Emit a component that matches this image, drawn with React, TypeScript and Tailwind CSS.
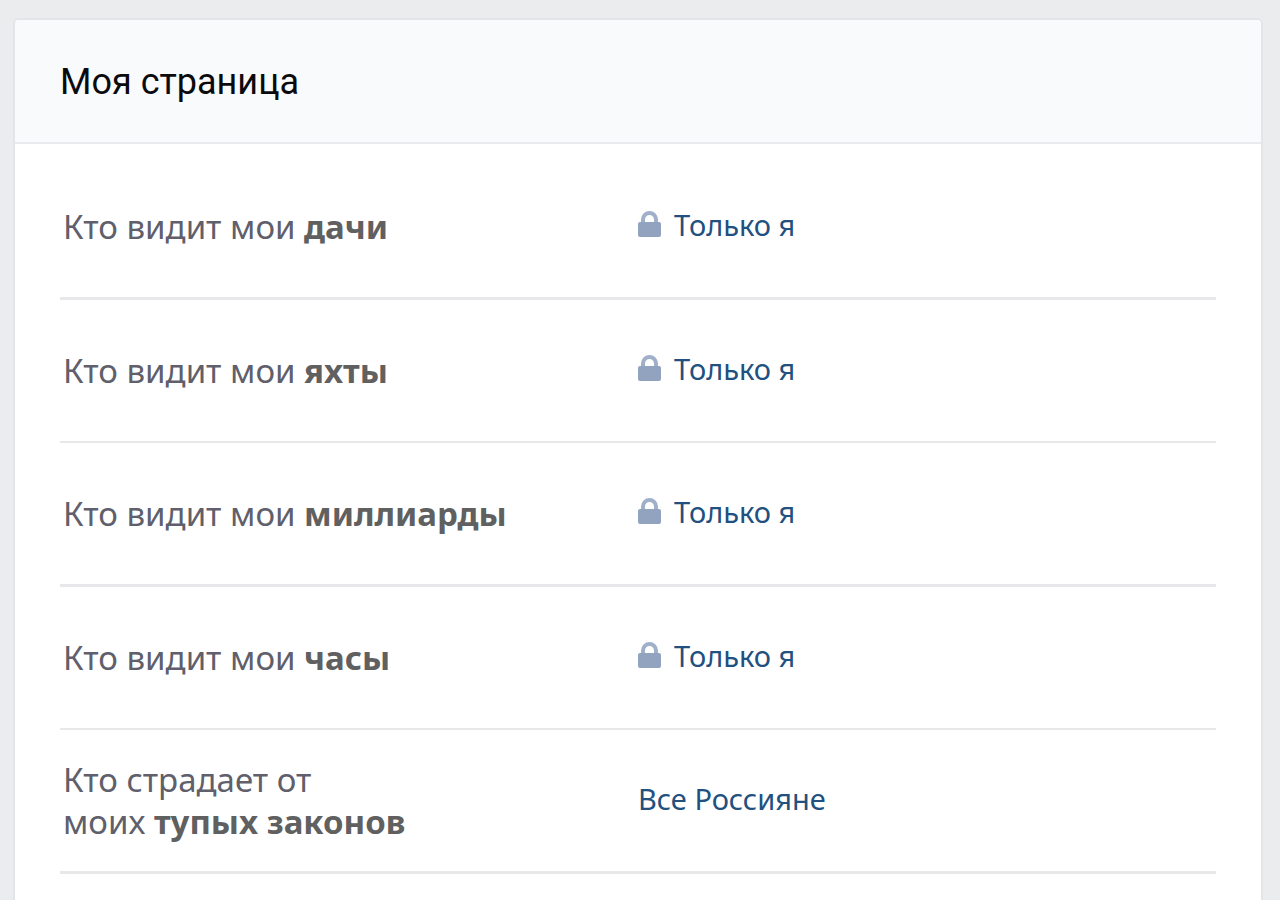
import React from "react";

interface PrivacySetting {
  id: string;
  text: React.ReactNode;
  subject: string;
  value: string;
  locked: boolean;
}

const settings: PrivacySetting[] = [
  { id: "dachas", text: "Кто видит мои ", subject: "дачи", value: "Только я", locked: true },
  { id: "yachts", text: "Кто видит мои ", subject: "яхты", value: "Только я", locked: true },
  { id: "billions", text: "Кто видит мои ", subject: "миллиарды", value: "Только я", locked: true },
  { id: "watches", text: "Кто видит мои ", subject: "часы", value: "Только я", locked: true },
  {
    id: "laws",
    text: (
      <>
        Кто страдает от
        <br />
        моих{" "}
      </>
    ),
    subject: "тупых законов",
    value: "Все Россияне",
    locked: false,
  },
];

const LockIcon: React.FC = () => (
  <svg
    viewBox="0 0 24 28"
    className="h-7 w-6 shrink-0"
    fill="none"
    aria-hidden="true"
  >
    <path
      d="M5 14V8.5a6.5 6.5 0 0 1 13 0V14"
      stroke="#a0b0c9"
      strokeWidth="4"
    />
    <rect x="0" y="11" width="23" height="15" rx="2" fill="#92a3c0" />
  </svg>
);

const SettingRow: React.FC<{ setting: PrivacySetting }> = ({ setting }) => (
  <li className="border-[#e8e8ea] odd:border-b-3 even:border-b-2">
    <div className="grid min-h-[141px] grid-cols-2 items-center">
      <span
        id={setting.id}
        className="pl-[3px] text-[33px] leading-[42px] text-[#605f6b]"
      >
        {setting.text}
        <b className="font-bold text-[#606060]">{setting.subject}</b>
      </span>
      <button
        type="button"
        aria-describedby={setting.id}
        className="flex cursor-pointer items-center gap-3 justify-self-start pb-1 text-[29px] leading-[42px] text-[#22507f] hover:underline"
      >
        {setting.locked && <LockIcon />}
        {setting.value}
      </button>
    </div>
  </li>
);

const App: React.FC = () => {
  return (
    <div className="min-h-screen bg-[#ebecee] pt-5 pr-[19px] pl-[15px] font-['Noto_Sans',sans-serif]">
      <main className="min-h-[calc(100vh-20px)] rounded-t-sm bg-white shadow-[0_0_0_2px_#e4e4e9]">
        <header className="rounded-t-sm border-b-2 border-[#e8eaee] bg-[#f9fafc] px-[45px] pt-[41px] pb-[39px]">
          <h1 className="font-['Roboto',sans-serif] text-4xl leading-[42px] text-[#0b0b0e]">
            Моя страница
          </h1>
        </header>
        <ul className="px-[45px] pt-3">
          {settings.map((setting) => (
            <SettingRow key={setting.id} setting={setting} />
          ))}
        </ul>
      </main>
    </div>
  );
};

export default App;
